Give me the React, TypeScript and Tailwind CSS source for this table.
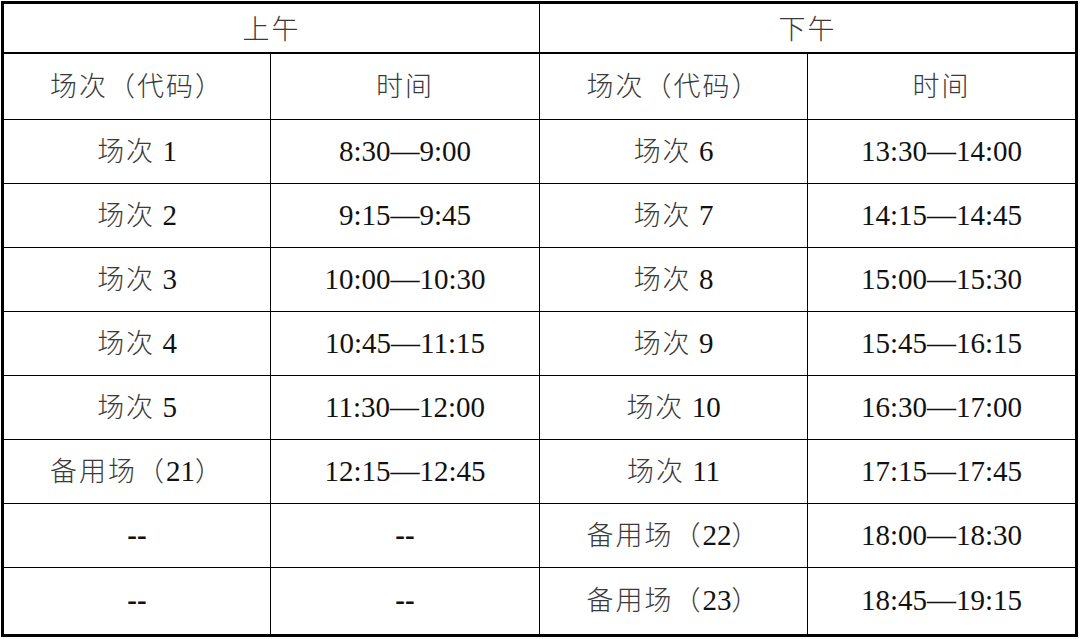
import React from "react";

const rows: [string, string, string, string][] = [
  ["场次 1", "8:30—9:00", "场次 6", "13:30—14:00"],
  ["场次 2", "9:15—9:45", "场次 7", "14:15—14:45"],
  ["场次 3", "10:00—10:30", "场次 8", "15:00—15:30"],
  ["场次 4", "10:45—11:15", "场次 9", "15:45—16:15"],
  ["场次 5", "11:30—12:00", "场次 10", "16:30—17:00"],
  ["备用场（21）", "12:15—12:45", "场次 11", "17:15—17:45"],
  ["--", "--", "备用场（22）", "18:00—18:30"],
  ["--", "--", "备用场（23）", "18:45—19:15"],
];

const cell = "flex items-center justify-center border-black";

// Chinese runs get a slightly smaller, lighter look like the Song face in the source
function Txt({ s }: { s: string }) {
  if (s === "--") return <span className="font-bold">--</span>;
  const parts = s.split(/([\u3000-\u9fff\uff00-\uffef]+)/).filter(Boolean);
  return (
    <span className="whitespace-pre">
      {parts.map((p, i) =>
        /[\u3000-\u9fff\uff00-\uffef]/.test(p) ? (
          <span key={i} className="text-[27px] font-light tracking-[2px] text-[#3a3a3a]">
            {p}
          </span>
        ) : (
          <span key={i}>{p}</span>
        )
      )}
    </span>
  );
}

export default function App() {
  return (
    <div
      className="w-[1080px] h-[639px] bg-white pl-px pt-px text-[29px] text-[#111]"
      style={{ fontFamily: '"Liberation Serif", "Noto Sans CJK SC", serif' }}
    >
      <div className="w-[1077px] h-[636px] border-[3px] border-black grid grid-cols-[267px_269px_268px_267px] grid-rows-[50px_66px_64px_64px_64px_64px_64px_64px_64px_1fr]">
        {/* top header */}
        <div className={`${cell} col-span-2 border-r border-b-2 pt-1`}><Txt s="上午" /></div>
        <div className={`${cell} col-span-2 border-b-2 pt-1`}><Txt s="下午" /></div>

        {/* sub header */}
        <div className={`${cell} border-r border-b`}><Txt s="场次（代码）" /></div>
        <div className={`${cell} border-r border-b`}><Txt s="时间" /></div>
        <div className={`${cell} border-r border-b`}><Txt s="场次（代码）" /></div>
        <div className={`${cell} border-b`}><Txt s="时间" /></div>

        {rows.map((r, i) => {
          const b = i === rows.length - 1 ? "" : "border-b";
          return (
            <React.Fragment key={i}>
              <div className={`${cell} border-r ${b}`}><Txt s={r[0]} /></div>
              <div className={`${cell} border-r ${b}`}><Txt s={r[1]} /></div>
              <div className={`${cell} border-r ${b}`}><Txt s={r[2]} /></div>
              <div className={`${cell} ${b}`}><Txt s={r[3]} /></div>
            </React.Fragment>
          );
        })}
      </div>
    </div>
  );
}
